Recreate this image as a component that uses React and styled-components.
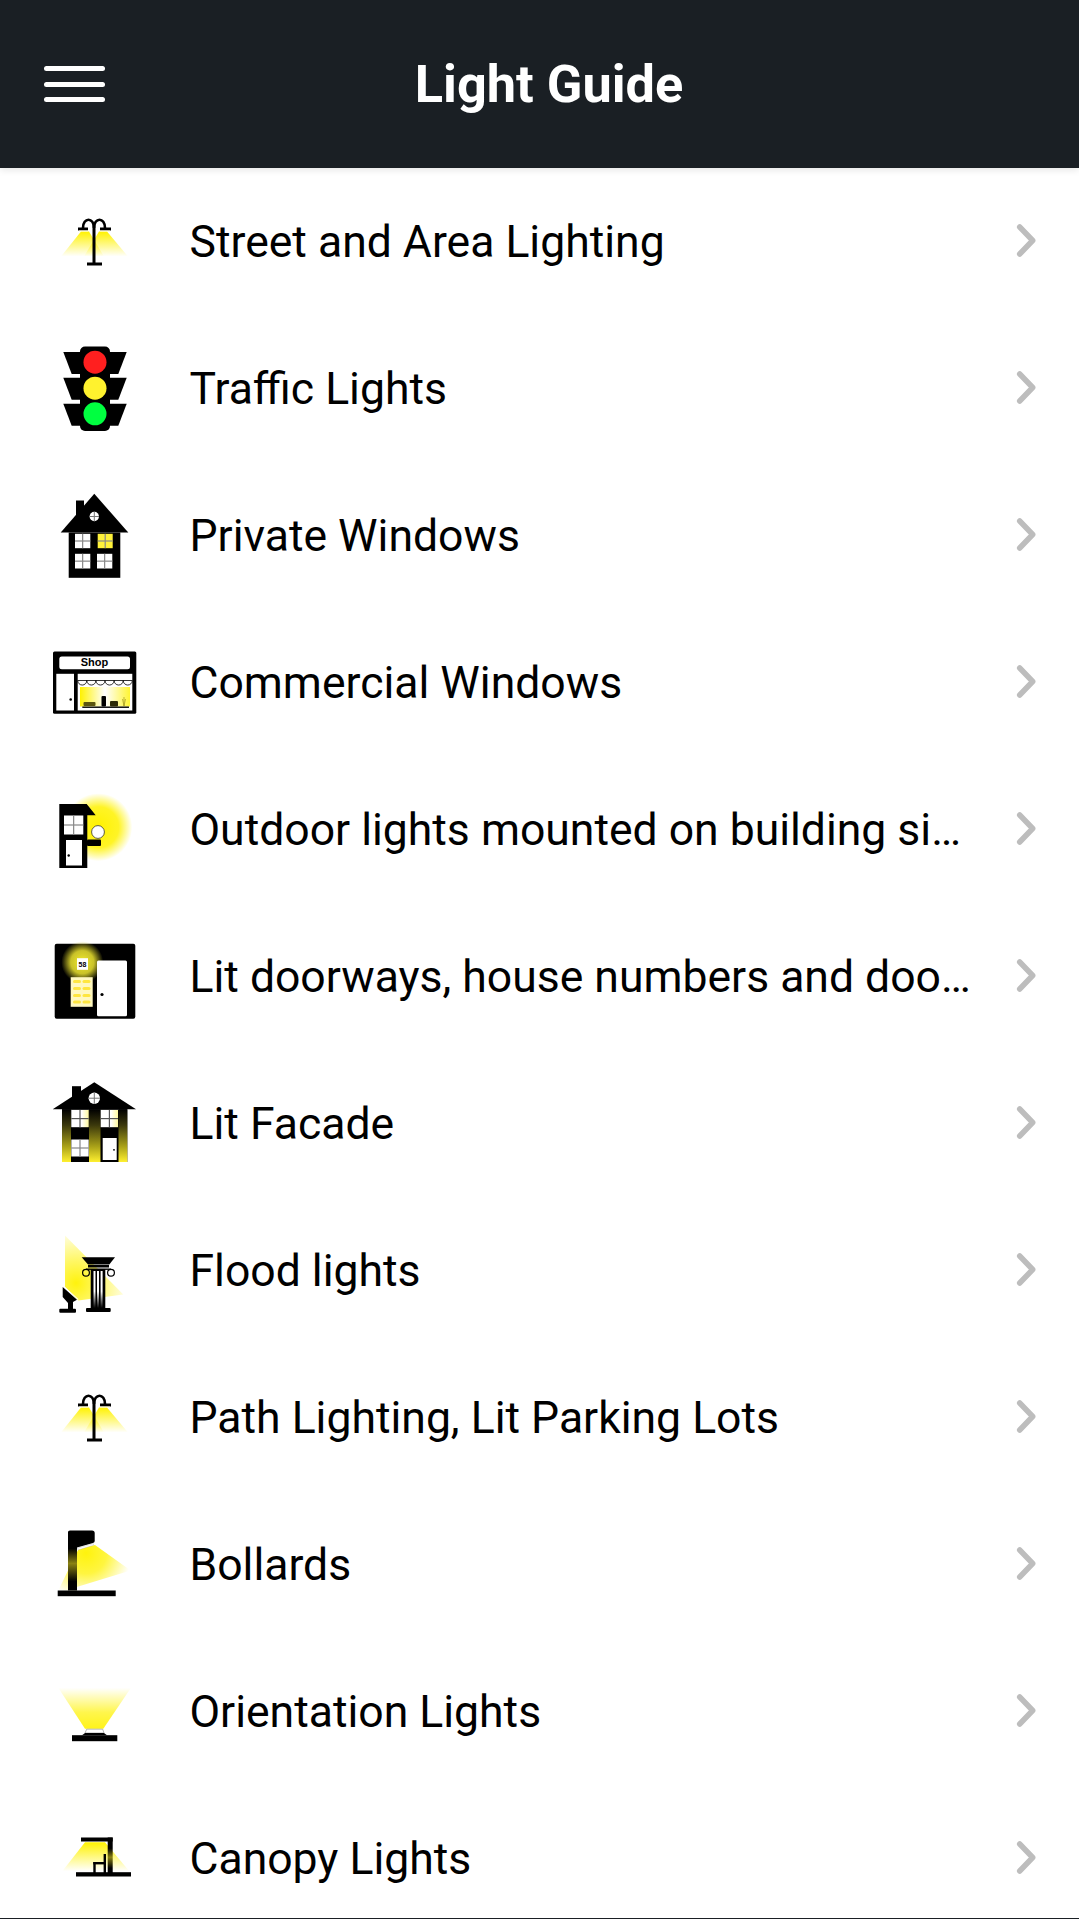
import React from 'react'
import styled, { createGlobalStyle } from 'styled-components'

const GlobalStyle = createGlobalStyle`
  html, body { margin: 0; padding: 0; background: #fff; }
  body { font-family: Roboto, "Liberation Sans", sans-serif; }
`

const Screen = styled.div`
  height: 100vh;
  display: flex;
  flex-direction: column;
  overflow: hidden;
  background: #fff;
`

const Header = styled.header`
  flex: 0 0 168px;
  display: flex;
  align-items: center;
  padding: 0 86px 0 44px;
  background: #1a1f24;
  box-shadow: 0 2px 7px rgba(0, 0, 0, 0.1);
  position: relative;
  z-index: 2;
`

const Burger = styled.div`
  width: 61px;
  display: flex;
  flex-direction: column;
  gap: 10.3px;
  span {
    display: block;
    height: 5px;
    border-radius: 3px;
    background: #fff;
  }
`

const Title = styled.h1`
  flex: 1;
  margin: 0;
  text-align: center;
  color: #fff;
  font-size: 52.3px;
  font-weight: 700;
  line-height: 56px;
`

const List = styled.div`
  flex: 1;
  min-height: 0;
  overflow: hidden;
`

const BottomEdge = styled.div`
  flex: 0 0 1px;
  background: #1a1f24;
`

const Row = styled.div`
  height: 147px;
  display: flex;
  align-items: center;
  padding: 0 43px 0 44px;
`

const IconBox = styled.svg`
  flex: 0 0 100px;
  width: 100px;
  height: 100px;
  margin-right: 45.5px;
`

const Label = styled.div`
  flex: 1;
  min-width: 0;
  font-size: 44.5px;
  line-height: 50px;
  color: #000;
  white-space: nowrap;
  overflow: hidden;
  text-overflow: ellipsis;
`

const Chevron = styled.svg`
  flex: 0 0 24px;
  width: 24px;
  height: 40px;
  margin-left: 33px;
`

const Y = '#fff200'

const Defs = () => (
  <defs>
    <linearGradient id="fadeDown" x1="0" y1="0" x2="0" y2="1">
      <stop offset="0" stopColor={Y} />
      <stop offset="1" stopColor={Y} stopOpacity="0" />
    </linearGradient>
    <linearGradient id="fadeUp" x1="0" y1="1" x2="0" y2="0">
      <stop offset="0" stopColor={Y} stopOpacity="0.9" />
      <stop offset="0.4" stopColor={Y} stopOpacity="0.7" />
      <stop offset="1" stopColor={Y} stopOpacity="0" />
    </linearGradient>
    <linearGradient id="shopGlow" x1="0" y1="0" x2="1" y2="0">
      <stop offset="0" stopColor={Y} />
      <stop offset="0.5" stopColor={Y} stopOpacity="0" />
      <stop offset="1" stopColor={Y} stopOpacity="0.8" />
    </linearGradient>
    <radialGradient id="glow">
      <stop offset="0" stopColor={Y} />
      <stop offset="0.6" stopColor={Y} stopOpacity="0.85" />
      <stop offset="1" stopColor={Y} stopOpacity="0" />
    </radialGradient>
    <radialGradient id="doorGlow">
      <stop offset="0" stopColor="#f2ea2e" />
      <stop offset="0.55" stopColor="#c9c228" />
      <stop offset="1" stopColor="#c9c228" stopOpacity="0" />
    </radialGradient>
    <radialGradient id="beam" gradientUnits="userSpaceOnUse" cx="32" cy="62" r="56">
      <stop offset="0" stopColor={Y} stopOpacity="0.95" />
      <stop offset="0.4" stopColor={Y} stopOpacity="0.6" />
      <stop offset="1" stopColor={Y} stopOpacity="0" />
    </radialGradient>
    <radialGradient id="lampBeam" gradientUnits="userSpaceOnUse" cx="42" cy="38" r="46">
      <stop offset="0" stopColor={Y} stopOpacity="0.95" />
      <stop offset="0.45" stopColor={Y} stopOpacity="0.75" />
      <stop offset="1" stopColor={Y} stopOpacity="0" />
    </radialGradient>
    <linearGradient id="wallGlow" x1="0" y1="0" x2="0" y2="1">
      <stop offset="0" stopColor="#000" />
      <stop offset="0.3" stopColor="#3b380c" />
      <stop offset="0.7" stopColor="#a8a018" />
      <stop offset="1" stopColor="#fff030" />
    </linearGradient>
    <linearGradient id="windowGlow" x1="0" y1="0" x2="1" y2="0">
      <stop offset="0" stopColor="#fff" />
      <stop offset="0.6" stopColor="#fff" />
      <stop offset="1" stopColor="#fff9a0" />
    </linearGradient>
    <linearGradient id="postLit" x1="0" y1="0" x2="0" y2="1">
      <stop offset="0" stopColor="#000" />
      <stop offset="0.3" stopColor="#000" />
      <stop offset="0.55" stopColor="#8a8212" />
      <stop offset="0.85" stopColor="#000" />
      <stop offset="1" stopColor="#000" />
    </linearGradient>
    <linearGradient id="shaftLit" x1="0" y1="0" x2="0" y2="1">
      <stop offset="0" stopColor="#fff" />
      <stop offset="0.55" stopColor="#fff" />
      <stop offset="1" stopColor="#000" />
    </linearGradient>
  </defs>
)

const lamp = (
  <>
    <polygon points="37,39.5 45,39.5 60,64.5 17,64.5" fill="url(#fadeDown)" />
    <polygon points="55,39.5 63,39.5 84,64.5 40,64.5" fill="url(#fadeDown)" />
    <rect x="48.5" y="32" width="3" height="40" fill="#000" />
    <rect x="43" y="70.5" width="15" height="3" fill="#000" />
    <path d="M39 36 C39 25 50 25 50 36 C50 25 61 25 61 36" fill="none" stroke="#000" strokeWidth="2.6" />
    <rect x="34" y="35.5" width="10" height="3" fill="#000" />
    <rect x="56" y="35.5" width="11" height="3" fill="#000" />
    <rect x="35" y="38.5" width="9" height="1" fill="#fffbd0" />
    <rect x="56" y="38.5" width="10" height="1" fill="#fffbd0" />
  </>
)

const paneGrid = (x, y, w, h, fill = '#fff') => (
  <>
    <rect x={x} y={y} width={w} height={h} fill={fill} />
    <rect x={x + w / 2 - 0.6} y={y} width="1.2" height={h} fill="#888" />
    <rect x={x} y={y + h / 2 - 0.6} width={w} height="1.2" fill="#888" />
  </>
)

const roundWindow = (cx, cy, r) => (
  <>
    <circle cx={cx} cy={cy} r={r} fill="#fff" />
    <rect x={cx - 0.5} y={cy - r} width="1" height={r * 2} fill="#777" />
    <rect x={cx - r} y={cy - 0.5} width={r * 2} height="1" fill="#777" />
  </>
)

const wing = y => `19.3,${y} 36,${y} 36,${y + 22} 27.7,${y + 22}`
const wingR = y => `82.7,${y} 66,${y} 66,${y + 22} 74.3,${y + 22}`

const icons = {
  street: lamp,
  traffic: (
    <>
      {[13, 38.8, 64.8].map(y => (
        <React.Fragment key={y}>
          <polygon points={wing(y)} fill="#000" />
          <polygon points={wingR(y)} fill="#000" />
        </React.Fragment>
      ))}
      <rect x="36" y="7.5" width="30" height="84.5" rx="5" fill="#000" />
      <circle cx="51" cy="23.2" r="11.5" fill="#ff1f1f" />
      <circle cx="51" cy="49.2" r="11.5" fill="#fff22e" />
      <circle cx="51" cy="74.8" r="11.5" fill="#00ff40" />
    </>
  ),
  house: (
    <>
      <rect x="32" y="14.5" width="8" height="22" fill="#000" />
      <polygon points="50.3,7.8 84.3,46.5 16.7,46.5" fill="#000" />
      <rect x="24.7" y="46.5" width="51.6" height="45.3" fill="#000" />
      {roundWindow(50.3, 30.5, 4.7)}
      {paneGrid(31, 47.8, 15.3, 14.4)}
      {paneGrid(53.7, 47.8, 15, 14.4, '#fff23a')}
      {paneGrid(31, 67.8, 15.3, 14.7)}
      {paneGrid(53, 67.8, 15.3, 14.7)}
    </>
  ),
  shop: (
    <>
      <rect x="9" y="18.5" width="83.3" height="62.3" rx="1.5" fill="#000" />
      <rect x="15.3" y="23.5" width="70.7" height="12.7" rx="2.5" fill="#fff" />
      <text x="50.5" y="32.6" textAnchor="middle" fontFamily="Liberation Sans, sans-serif" fontWeight="700" fontSize="11" fill="#000">Shop</text>
      <rect x="12.3" y="40.8" width="17.7" height="36.7" fill="#fff" />
      <circle cx="26.7" cy="66.5" r="1.3" fill="#000" />
      <rect x="33.7" y="40.8" width="54.6" height="36.7" fill="#fff" />
      <rect x="36" y="54" width="50" height="19.5" fill="url(#shopGlow)" />
      <path d="M33.7 47.5 H88.3 M33.7 47.5 a4.55 4.55 0 0 0 9.1 0 a4.55 4.55 0 0 0 9.1 0 a4.55 4.55 0 0 0 9.1 0 a4.55 4.55 0 0 0 9.1 0 a4.55 4.55 0 0 0 9.1 0 a4.55 4.55 0 0 0 9.1 0" fill="none" stroke="#000" strokeWidth="0.8" />
      <rect x="38.3" y="73.5" width="46.7" height="1.4" fill="#000" />
      <rect x="39.5" y="69" width="12" height="4" rx="1" fill="#5c5610" />
      <rect x="57.5" y="63" width="4.5" height="10.5" rx="1" fill="#000" />
      <rect x="66" y="68" width="8" height="5.5" rx="1" fill="#2e2b08" />
      <path d="M80 73 L78.5 66 M80 73 V64 M80 73 L81.5 66" stroke="#a39a20" strokeWidth="0.7" fill="none" />
    </>
  ),
  outdoor: (
    <>
      <circle cx="54.3" cy="47.2" r="34" fill="url(#glow)" />
      <polygon points="15.3,24 42.7,24 51.7,35.2 43.3,35.2 43.3,88 15.3,88" fill="#000" />
      {paneGrid(20, 35.5, 19.3, 19)}
      <rect x="22" y="60" width="16" height="25.5" fill="#fff" />
      <circle cx="24.7" cy="75.5" r="1.2" fill="#000" />
      <rect x="43" y="59.5" width="14" height="6.5" rx="1" fill="#000" />
      <circle cx="54" cy="52" r="6.4" fill="#fff" stroke="#333" strokeWidth="0.8" />
    </>
  ),
  doorway: (
    <>
      <rect x="10.7" y="16.8" width="80.6" height="75" rx="2" fill="#000" />
      <circle cx="38.3" cy="35.2" r="21" fill="url(#doorGlow)" />
      <rect x="33" y="31.2" width="11" height="11.6" fill="#fff" />
      <text x="38.5" y="40" textAnchor="middle" fontFamily="Liberation Sans, sans-serif" fontWeight="700" fontSize="7" fill="#000">58</text>
      <rect x="26.7" y="50.2" width="22" height="29.6" fill="#fff8c0" />
      {[53, 60, 67, 73.5].map(y => (
        <React.Fragment key={y}>
          <rect x="29" y={y} width="8" height="3" rx="1.5" fill="#ffe640" />
          <rect x="38.5" y={y} width="8" height="3" rx="1.5" fill="#ffe640" />
        </React.Fragment>
      ))}
      <rect x="53" y="33.5" width="30" height="55.7" rx="1.5" fill="#fff" />
      <circle cx="58" cy="67.5" r="1.6" fill="#000" />
    </>
  ),
  facade: (
    <>
      <rect x="28" y="12.2" width="9" height="14" fill="#000" />
      <polygon points="50.3,8.2 92,35.2 8.7,35.2" fill="#000" />
      {roundWindow(50.3, 24.2, 5.7)}
      <rect x="18" y="35.2" width="65.3" height="52.8" fill="#000" />
      <rect x="18" y="35.2" width="9" height="52.8" fill="url(#wallGlow)" />
      <rect x="45" y="35.2" width="11.5" height="52.8" fill="url(#wallGlow)" />
      <rect x="74.5" y="35.2" width="8.8" height="52.8" fill="url(#wallGlow)" />
      <rect x="27.3" y="36" width="17.4" height="17.2" fill="url(#windowGlow)" />
      <rect x="35.4" y="36" width="1.2" height="17.2" fill="#555" />
      <rect x="27.3" y="44" width="17.4" height="1.2" fill="#555" />
      <rect x="56.7" y="36" width="17.3" height="17.2" fill="url(#windowGlow)" />
      <rect x="64.8" y="36" width="1.2" height="17.2" fill="#555" />
      <rect x="56.7" y="44" width="17.3" height="1.2" fill="#555" />
      {paneGrid(27.3, 65.5, 17.4, 17)}
      <rect x="58.7" y="64" width="14" height="22" fill="#fff" />
      <circle cx="70" cy="75.8" r="0.9" fill="#000" />
    </>
  ),
  flood: (
    <>
      <polygon points="21,14.5 79.3,73.5 34.3,79.5 21,66" fill="url(#beam)" />
      <polygon points="37.7,36.2 71,36.2 65.3,43.5 44,43.5" fill="#000" />
      <rect x="44" y="44" width="21" height="2.5" fill="#000" />
      <circle cx="42" cy="51.8" r="3.4" fill="none" stroke="#000" strokeWidth="1.2" />
      <circle cx="67" cy="51.8" r="3.4" fill="none" stroke="#000" strokeWidth="1.2" />
      <rect x="42" y="47.5" width="25" height="1.4" fill="#000" />
      <rect x="46.7" y="48" width="14.6" height="39" fill="#000" />
      <rect x="49.5" y="50" width="2" height="37" fill="url(#shaftLit)" />
      <rect x="53" y="50" width="2" height="37" fill="url(#shaftLit)" />
      <rect x="56.6" y="50" width="2" height="37" fill="url(#shaftLit)" />
      <rect x="42" y="87" width="24.7" height="4" rx="1" fill="#000" />
      <polygon points="18.7,66 33,78.8 29,81 29,88 24,88 24,82 18.7,76" fill="#000" />
      <line x1="20" y1="65.5" x2="34.3" y2="78.5" stroke="#fff" strokeWidth="1" />
      <rect x="15.3" y="87.8" width="16.7" height="4" rx="1" fill="#000" />
    </>
  ),
  path: lamp,
  bollard: (
    <>
      <polygon points="35,33 51,30 86.7,55.5 32.7,72 32.7,75.5 14.3,75.5" fill="url(#lampBeam)" />
      <path d="M24 17 Q24 15.5 26 15.5 H48 Q50.7 15.5 50.7 18 V26 Q50.7 27.5 49 28 L33 32.5 V75.5 H24 Z" fill="url(#postLit)" />
      <polygon points="33.7,33 49.3,28.6 49.6,30.2 34,35" fill="#fff" stroke="#999" strokeWidth="0.3" />
      <rect x="13.7" y="75.5" width="58" height="5.7" fill="#000" />
    </>
  ),
  orientation: (
    <>
      <polygon points="14.3,25.8 87,25.8 59.3,66.8 41,66.8" fill="url(#fadeUp)" />
      <polygon points="42.7,67.2 58.7,67.2 60,71 41,71" fill="#fff" stroke="#888" strokeWidth="0.6" />
      <polygon points="41,71 60,71 63,73.2 38,73.2" fill="#000" />
      <rect x="28" y="73.2" width="45.3" height="6" fill="#000" />
    </>
  ),
  canopy: (
    <>
      <polygon points="41,33.2 61,33.2 85.3,62.2 18.3,62.2" fill="url(#fadeDown)" />
      <rect x="37" y="28.5" width="31.7" height="4" fill="#000" />
      <rect x="63.7" y="28.5" width="5" height="36" fill="url(#postLit)" />
      <rect x="49.3" y="53" width="12.7" height="2.4" fill="#000" />
      <rect x="49.3" y="53" width="2.4" height="11" fill="#000" />
      <rect x="59.6" y="45" width="2.4" height="19" fill="#000" />
      <rect x="32" y="63.2" width="55" height="4.3" fill="#000" />
    </>
  ),
}

const items = [
  { icon: 'street', label: 'Street and Area Lighting' },
  { icon: 'traffic', label: 'Traffic Lights' },
  { icon: 'house', label: 'Private Windows' },
  { icon: 'shop', label: 'Commercial Windows' },
  { icon: 'outdoor', label: 'Outdoor lights mounted on building sides' },
  { icon: 'doorway', label: 'Lit doorways, house numbers and doorbells' },
  { icon: 'facade', label: 'Lit Facade' },
  { icon: 'flood', label: 'Flood lights' },
  { icon: 'path', label: 'Path Lighting, Lit Parking Lots' },
  { icon: 'bollard', label: 'Bollards' },
  { icon: 'orientation', label: 'Orientation Lights' },
  { icon: 'canopy', label: 'Canopy Lights' },
]

const App = () => (
  <Screen>
    <GlobalStyle />
    <Header>
      <Burger>
        <span />
        <span />
        <span />
      </Burger>
      <Title>Light Guide</Title>
    </Header>
    <List>
      {items.map(item => (
        <Row key={item.label}>
          <IconBox viewBox="0 0 100 100">
            <Defs />
            {icons[item.icon]}
          </IconBox>
          <Label>{item.label}</Label>
          <Chevron viewBox="0 0 24 40">
            <polyline points="7.7,5 20.7,18.5 7.7,32" fill="none" stroke="#bdbdbd" strokeWidth="5.5" strokeLinecap="round" strokeLinejoin="round" />
          </Chevron>
        </Row>
      ))}
    </List>
    <BottomEdge />
  </Screen>
)

export default App
